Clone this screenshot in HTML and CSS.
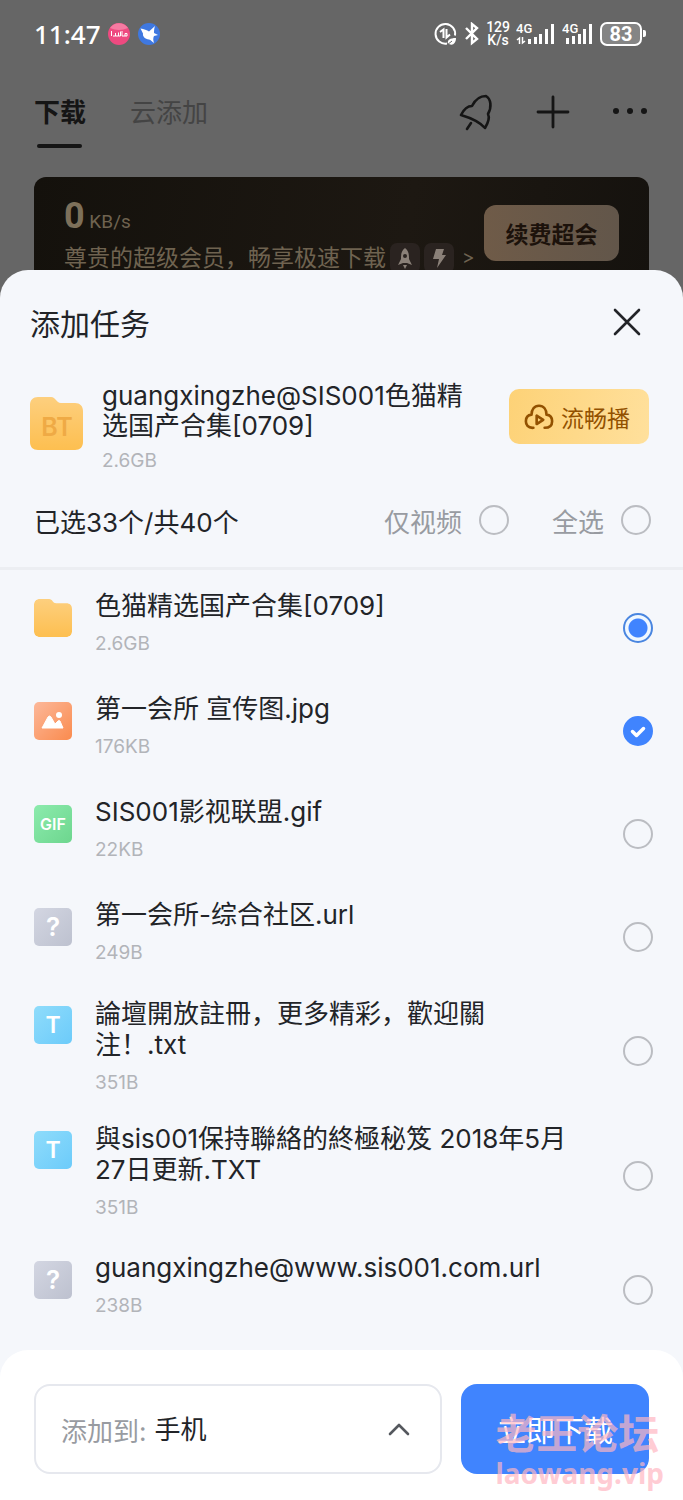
FILE: index.html
```html
<!DOCTYPE html>
<html lang="zh-CN">
<head>
    <meta charset="UTF-8">
    <meta name="viewport" content="width=device-width, initial-scale=1.0">
    <title>添加任务</title>
    <link rel="stylesheet" href="styles.css">
</head>
<body>
    <!-- Status bar -->
    <div class="status-bar">
        <span class="clock">11:47</span>
        <svg class="app-dot" viewBox="0 0 22 22">
            <circle cx="11" cy="11" r="11" fill="#ee4a80"/>
            <path d="M2 5a11 11 0 0 1 18 0q-9 4-18 0z" fill="#f57ba2"/>
            <path d="M3.500 8v5M5 13h2.500v-3M7.500 13h3V9.500M10.500 13h2V8.500M14 13V8M14 13h5v-2.500h-2V13" fill="none" stroke="#fff" stroke-width="1"/>
        </svg>
        <svg class="app-dot app-bird" viewBox="0 0 22 22">
            <circle cx="11" cy="11" r="11" fill="#3f78e0"/>
            <path d="M2.500 5.500C6 6 9 7 11 8.500L17 3c-1 3-1 5-1 7l4 2-4 1c-1 2-1 4 0 7-2-1-3-3-5-3.500C7 16 4.500 13.500 5 10.500z" fill="#fff"/>
        </svg>
        <div class="status-right">
            <svg width="24" height="24" viewBox="0 0 24 24" fill="none" stroke="#fff" stroke-width="2">
                <path d="M21 13.500A9.800 9.800 0 1 0 13 21.500"/>
                <path d="M6 10l3.500-2.500V16M12.500 7v8.500l3.500-3"/>
                <path d="M14 22c-1-4 2-6 8-6 0 5-3 8-7 6z" fill="#fff" stroke="none"/>
                <path d="M13 23l5-4" stroke="#666" stroke-width="1"/>
            </svg>
            <svg width="16" height="24" viewBox="0 0 16 24" fill="none" stroke="#fff" stroke-width="2.400">
                <path d="M2 6l11 11-5 4V2l5 4L2 17"/>
            </svg>
            <span class="speed">129<br>K/s</span>
            <svg class="signal" width="40" height="24" viewBox="0 0 40 24" fill="#fff">
                <text x="0" y="11" font-size="13" font-weight="500">4G</text>
                <path d="M1 18l2.500-2V22M6.500 15v6l2.500-2" fill="none" stroke="#fff" stroke-width="1.500"/>
                <path d="M12 17h3v5h-3zM18 15h3v7h-3zM23 12h3v10h-3zM29 7h3v15h-3zM35 2h3v20h-3z"/>
            </svg>
            <svg class="signal" width="32" height="24" viewBox="0 0 32 24" fill="#fff">
                <text x="0" y="11" font-size="13" font-weight="500">4G</text>
                <path d="M4 16h3v6H4zM10 14h3v8h-3zM16 12h3v10h-3zM21 7h3v15h-3zM27 2h3v20h-3z"/>
            </svg>
            <span class="battery">83</span>
        </div>
    </div>

    <!-- Page under the sheet -->
    <nav class="tabs">
        <a href="#" class="tab tab-active">下载</a>
        <a href="#" class="tab">云添加</a>
        <div class="nav-actions">
            <button type="button" aria-label="加速">
                <svg width="36" height="40" viewBox="0 0 36 40" fill="none" stroke="#151515" stroke-width="2.600" stroke-linejoin="round" stroke-linecap="round">
                    <path d="M3 23c3-6 6-9 11-9 3-6 8-10 14-10 5 3 6 11 2 18 2 4 0 9-3 14-6-7-14-10-24-13z"/>
                    <path d="M13 31l-4 6"/>
                </svg>
            </button>
            <button type="button" aria-label="添加">
                <svg width="34" height="34" viewBox="0 0 34 34" stroke="#151515" stroke-width="2.800" stroke-linecap="round">
                    <path d="M17 2v30M2 17h30"/>
                </svg>
            </button>
            <button type="button" aria-label="更多">
                <svg width="36" height="34" viewBox="0 0 36 34" fill="#151515">
                    <circle cx="4" cy="16" r="3"/><circle cx="18" cy="16" r="3"/><circle cx="32" cy="16" r="3"/>
                </svg>
            </button>
        </div>
    </nav>

    <section class="banner">
        <div class="banner-text">
            <div class="rate"><b>0</b> KB/s</div>
            <div class="perks">
                <span>尊贵的超级会员，畅享极速下载</span>
                <svg class="perk" viewBox="0 0 30 30">
                    <path d="M15 5c4 3 4 7 4 11l3 6-5-2h-4l-5 2 3-6c0-4 0-8 4-11zM13 22h4l-2 4z" fill="#8a8078"/>
                    <circle cx="15" cy="13" r="2" fill="#2a2320"/>
                </svg>
                <svg class="perk" viewBox="0 0 30 30">
                    <path d="M12 6h8l-2 6h4l-9 13 2-9H9z" fill="#8a8078"/>
                </svg>
                <span class="more">&gt;</span>
            </div>
        </div>
        <button type="button" class="renew">续费超会</button>
    </section>

    <!-- Add task sheet -->
    <main class="sheet">
        <header class="sheet-head">
            <h1>添加任务</h1>
            <button type="button" aria-label="关闭">
                <svg width="28" height="28" viewBox="0 0 28 28" stroke="#222428" stroke-width="2.600" stroke-linecap="round">
                    <path d="M2 2l24 24M26 2L2 26"/>
                </svg>
            </button>
        </header>

        <section class="torrent">
            <svg class="torrent-icon" viewBox="0 0 53 53">
                <defs>
                    <linearGradient id="folder" x1="0" y1="0" x2="0" y2="1">
                        <stop offset="0" stop-color="#fdcf7e"/>
                        <stop offset="1" stop-color="#fdbf50"/>
                    </linearGradient>
                </defs>
                <path d="M8 0h13c5 0 5 6 10 6h14c5 0 8 3 8 8v31c0 5-3 8-8 8H8c-5 0-8-3-8-8V8c0-5 3-8 8-8z" fill="url(#folder)"/>
                <text x="27" y="39" text-anchor="middle" font-size="25" font-weight="600" fill="#efaa45">BT</text>
            </svg>
            <div class="torrent-info">
                <h2>guangxingzhe@SIS001色猫精选国产合集[0709]</h2>
                <p class="size">2.6GB</p>
            </div>
            <button type="button" class="play">
                <svg width="30" height="28" viewBox="0 0 32 28" fill="none" stroke="#925100" stroke-width="2.800" stroke-linecap="round" stroke-linejoin="round">
                    <path d="M10 25.500C4 26 2 22 2 18.500 2 15 4 12 8 11.500 8 6 11 2 16 2s8 4 8 9.500c4 .5 6 3.500 6 7 0 3.500-2 7-8 7"/>
                    <path d="M13.500 12.500v9l7-4.500z"/>
                </svg>
                流畅播
            </button>
        </section>

        <section class="filter">
            <p>已选33个/共40个</p>
            <label>仅视频<input type="checkbox" class="check"></label>
            <label>全选<input type="checkbox" class="check"></label>
        </section>

        <ul class="files">
            <li class="file">
                <svg class="file-icon" viewBox="0 0 53 53">
                    <path d="M8 0h13c5 0 5 6 10 6h14c5 0 8 3 8 8v31c0 5-3 8-8 8H8c-5 0-8-3-8-8V8c0-5 3-8 8-8z" fill="url(#folder)"/>
                </svg>
                <label class="file-info" for="file1">
                    <span class="name">色猫精选国产合集[0709]</span>
                    <span class="size">2.6GB</span>
                </label>
                <input type="checkbox" class="check check-partial" id="file1">
            </li>
            <li class="file">
                <svg class="file-icon icon-image" viewBox="0 0 38 38">
                    <path d="M8 26l6-11q1.500-2 3 0l4 7 3-3q1.200-1 2 0l3 7z" fill="#fff" stroke="#fff" stroke-linejoin="round"/>
                    <circle cx="25" cy="13" r="3" fill="#fff"/>
                </svg>
                <label class="file-info" for="file2">
                    <span class="name">第一会所 宣传图.jpg</span>
                    <span class="size">176KB</span>
                </label>
                <input type="checkbox" class="check" id="file2" checked>
            </li>
            <li class="file">
                <span class="file-icon icon-gif">GIF</span>
                <label class="file-info" for="file3">
                    <span class="name">SIS001影视联盟.gif</span>
                    <span class="size">22KB</span>
                </label>
                <input type="checkbox" class="check" id="file3">
            </li>
            <li class="file">
                <span class="file-icon icon-unknown">?</span>
                <label class="file-info" for="file4">
                    <span class="name">第一会所-综合社区.url</span>
                    <span class="size">249B</span>
                </label>
                <input type="checkbox" class="check" id="file4">
            </li>
            <li class="file file-tall">
                <span class="file-icon icon-text">T</span>
                <label class="file-info" for="file5">
                    <span class="name">論壇開放註冊，更多精彩，歡迎關注！.txt</span>
                    <span class="size">351B</span>
                </label>
                <input type="checkbox" class="check" id="file5">
            </li>
            <li class="file file-tall">
                <span class="file-icon icon-text">T</span>
                <label class="file-info" for="file6">
                    <span class="name">與sis001保持聯絡的終極秘笈 2018年5月27日更新.TXT</span>
                    <span class="size">351B</span>
                </label>
                <input type="checkbox" class="check" id="file6">
            </li>
            <li class="file">
                <span class="file-icon icon-unknown">?</span>
                <label class="file-info" for="file7">
                    <span class="name">guangxingzhe@www.sis001.com.url</span>
                    <span class="size">238B</span>
                </label>
                <input type="checkbox" class="check" id="file7">
            </li>
        </ul>

        <footer class="actions">
            <div class="target">
                <label for="target">添加到:</label>
                <select id="target">
                    <option>手机</option>
                </select>
                <svg width="22" height="14" viewBox="0 0 22 14" fill="none" stroke="#55585e" stroke-width="2.600" stroke-linecap="round" stroke-linejoin="round">
                    <path d="M2 12l9-9 9 9"/>
                </svg>
            </div>
            <button type="button" class="download">立即下载</button>
            <div class="watermark">老王论坛<span>laowang.vip</span></div>
        </footer>
    </main>
</body>
</html>
```

FILE: styles.css
```css
* {
    box-sizing: border-box;
}

body {
    margin: 0;
    background-color: #666666;
    color: #222428;
    font-family: Inter, "Noto Sans CJK SC", sans-serif;
    font-size: 26px;
}

h1, h2, p, ul {
    margin: 0;
    padding: 0;
    font-weight: 400;
}

button, select {
    margin: 0;
    padding: 0;
    border: none;
    background: none;
    color: inherit;
    font-family: inherit;
    font-size: inherit;
}

svg {
    display: block;
    flex: none;
}

/* Status bar */
.status-bar {
    display: flex;
    align-items: center;
    height: 68px;
    padding: 0 41px 0 34px;
    color: white;
}

.clock {
    margin-right: 7px;
    font-family: "Noto Sans", sans-serif;
    font-size: 26px;
    font-weight: 500;
}

.app-dot {
    width: 22px;
    height: 22px;
}

.app-bird {
    margin-left: 8px;
}

.status-right {
    display: flex;
    align-items: center;
    gap: 6px;
    margin-left: auto;
    font-family: Roboto, sans-serif;
}

.speed {
    font-size: 14px;
    font-weight: 500;
    line-height: 13px;
    text-align: center;
}

.battery {
    position: relative;
    width: 42px;
    height: 24px;
    border: 2px solid white;
    border-radius: 7px;
    background-color: #858585;
    font-size: 20px;
    font-weight: 700;
    line-height: 20px;
    text-align: center;
}

.battery::after {
    content: "";
    position: absolute;
    top: 6px;
    right: -6px;
    width: 3px;
    height: 7px;
    border-radius: 0 2px 2px 0;
    background-color: white;
}

/* Tabs */
.tabs {
    display: flex;
    align-items: center;
    height: 88px;
    padding: 0 35px 0 34px;
}

.tab {
    padding: 12px 0 11px;
    color: #444444;
    line-height: 36px;
    text-decoration: none;
}

.tab + .tab {
    margin-left: 44px;
}

.tab-active {
    position: relative;
    color: #151515;
    font-weight: 700;
}

.tab-active::after {
    content: "";
    position: absolute;
    left: 3px;
    right: 4px;
    bottom: -6px;
    height: 4px;
    border-radius: 2px;
    background-color: #151515;
}

.nav-actions {
    display: flex;
    align-items: center;
    gap: 42px;
    margin-left: auto;
}

/* Member banner */
.banner {
    display: flex;
    align-items: flex-start;
    justify-content: space-between;
    height: 121px;
    margin: 21px 34px 0;
    padding: 0 30px;
    border-radius: 12px 12px 0 0;
    background: linear-gradient(100deg, #14110c, #1d1812 60%, #15120e);
    color: #6f6350;
}

.banner-text {
    padding-top: 17px;
    white-space: nowrap;
}

.rate {
    height: 46px;
    font-family: Roboto, sans-serif;
    font-size: 19px;
    line-height: 44px;
}

.rate b {
    color: #7d705a;
    font-size: 36px;
}

.perks {
    display: flex;
    align-items: center;
    gap: 4px;
    font-size: 23px;
    line-height: 36px;
}

.perk {
    width: 30px;
    height: 30px;
    border-radius: 7px;
    background-color: #2a2320;
}

.more {
    margin-left: 4px;
    font-size: 19px;
}

.renew {
    flex: none;
    width: 135px;
    height: 56px;
    margin-top: 28px;
    border-radius: 12px;
    background: linear-gradient(90deg, #6f5b48, #62564a);
    color: #1c120b;
    font-size: 23px;
    font-weight: 700;
}

/* Sheet */
.sheet {
    position: relative;
    margin-top: -28px;
    border-radius: 28px 28px 0 0;
    background-color: #f5f7fb;
}

.sheet-head {
    display: flex;
    align-items: center;
    justify-content: space-between;
    height: 111px;
    padding: 0 42px 8px 30px;
}

.sheet-head h1 {
    font-size: 30px;
}

.torrent {
    display: flex;
    align-items: flex-start;
    padding: 0 34px 0 30px;
}

.torrent-icon {
    width: 53px;
    height: 53px;
    margin-top: 16px;
}

.torrent-info {
    flex: 1;
    margin-left: 19px;
    padding-right: 36px;
}

.torrent-info h2 {
    font-size: 26px;
    line-height: 30px;
}

.torrent-info .size {
    margin-top: 8px;
}

.size {
    color: #b2b4b9;
    font-size: 19px;
    line-height: 24px;
}

.play {
    display: flex;
    align-items: center;
    justify-content: center;
    gap: 7px;
    width: 140px;
    height: 55px;
    margin-top: 8px;
    padding-right: 4px;
    border-radius: 10px;
    background: linear-gradient(100deg, #fdd277, #ffe09c);
    color: #925100;
    font-size: 23px;
}

.filter {
    display: flex;
    align-items: center;
    height: 94px;
    padding: 0 32px 0 34px;
}

.filter p {
    margin-right: auto;
}

.filter label {
    display: flex;
    align-items: center;
    gap: 17px;
    margin-left: 43px;
    color: #989ba1;
}

.check {
    appearance: none;
    flex: none;
    width: 30px;
    height: 30px;
    margin: 0;
    border: 2px solid #bbbdc2;
    border-radius: 50%;
}

.check:checked {
    border-color: #4084fe;
    background: #4084fe url('data:image/svg+xml,<svg xmlns="http://www.w3.org/2000/svg" viewBox="0 0 26 26" fill="none" stroke="white" stroke-width="3.500" stroke-linecap="round" stroke-linejoin="round"><path d="M7.500 13.500l4 4 7-7"/></svg>');
}

.check-partial {
    border-color: #4a86e0;
    background: radial-gradient(circle, #4084fe 9px, #f0f8ff 10px);
}

/* File list */
.files {
    padding: 6px 0 9px;
    border-top: 3px solid #eceef2;
    list-style: none;
}

.file {
    display: flex;
    align-items: center;
    height: 103px;
    padding: 0 30px 0 34px;
}

.file-tall {
    height: 125px;
}

.file-icon {
    align-self: flex-start;
    width: 38px;
    height: 38px;
    margin-top: 23px;
    border-radius: 5px;
    color: white;
    font-weight: 600;
    line-height: 38px;
    text-align: center;
}

.file-tall .file-icon {
    margin-top: 18px;
}

.icon-image {
    background: linear-gradient(135deg, #fcb89a, #fa8b4e);
}

.icon-gif {
    background: linear-gradient(135deg, #8cebad, #6dd68e);
    font-size: 16px;
}

.icon-unknown {
    background: linear-gradient(135deg, #d3d6e2, #bdc1cf);
    font-size: 26px;
}

.icon-text {
    background: linear-gradient(135deg, #8fdcfb, #6ccbfa);
    font-size: 23px;
}

.file-info {
    flex: 1;
    align-self: flex-start;
    margin: 0 52px 0 23px;
    padding-top: 14px;
}

.file-tall .file-info {
    padding-top: 10px;
}

.name, .file-info .size {
    display: block;
}

.name {
    line-height: 31px;
}

.file-info .size {
    margin-top: 11px;
}

/* Bottom actions */
.actions {
    position: relative;
    display: flex;
    gap: 19px;
    padding: 34px 34px 26px;
    border-radius: 28px 28px 0 0;
    background-color: white;
}

.target {
    display: flex;
    flex: 1;
    align-items: center;
    height: 90px;
    padding: 0 30px 0 25px;
    border: 2px solid #e6e8ee;
    border-radius: 16px;
}

.target label {
    margin-right: 8px;
    color: #989ba1;
}

.target select {
    appearance: none;
    flex: 1;
}

.download {
    width: 188px;
    height: 90px;
    border-radius: 16px;
    background-color: #4084fe;
    color: white;
    font-size: 29px;
}

.watermark {
    position: absolute;
    right: 19px;
    bottom: 11px;
    color: rgba(255, 182, 193, 0.7);
    font-family: "Noto Sans", "Noto Sans CJK SC", sans-serif;
    font-size: 41px;
    font-weight: 700;
    line-height: 48px;
    pointer-events: none;
}

.watermark span {
    display: block;
    font-size: 28px;
    line-height: 32px;
}
```
